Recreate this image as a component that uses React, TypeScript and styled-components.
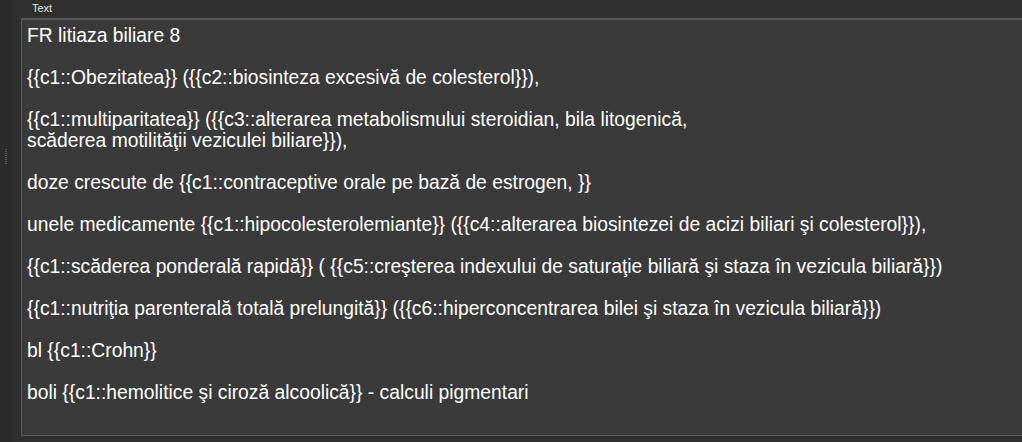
import styled, { createGlobalStyle } from "styled-components";

const paragraphs: string[][] = [
    ["FR litiaza biliare 8"],
    ["{{c1::Obezitatea}} ({{c2::biosinteza excesivă de colesterol}}),"],
    [
        "{{c1::multiparitatea}} ({{c3::alterarea metabolismului steroidian, bila litogenică,",
        "scăderea motilităţii veziculei biliare}}),",
    ],
    ["doze crescute de {{c1::contraceptive orale pe bază de estrogen, }}"],
    ["unele medicamente {{c1::hipocolesterolemiante}} ({{c4::alterarea biosintezei de acizi biliari şi colesterol}}),"],
    ["{{c1::scăderea ponderală rapidă}} ( {{c5::creşterea indexului de saturaţie biliară şi staza în vezicula biliară}})"],
    ["{{c1::nutriţia parenterală totală prelungită}} ({{c6::hiperconcentrarea bilei şi staza în vezicula biliară}})"],
    ["bl {{c1::Crohn}}"],
    ["boli {{c1::hemolitice şi ciroză alcoolică}} - calculi pigmentari"],
];

export default function App() {
    return (
        <>
            <GlobalStyle />
            <Page>
                <Splitter>
                    <Grip>
                        {Array.from({ length: 8 }).map((_, i) => (
                            <GripDot key={i} />
                        ))}
                    </Grip>
                </Splitter>
                <Field>
                    <FieldLabel>Text</FieldLabel>
                    <Editor>
                        {paragraphs.map((lines, i) => (
                            <Paragraph key={i}>
                                {lines.map((line, j) => (
                                    <Line key={j}>{line}</Line>
                                ))}
                            </Paragraph>
                        ))}
                    </Editor>
                </Field>
            </Page>
        </>
    );
}

const GlobalStyle = createGlobalStyle`
    html, body {
        margin: 0;
        padding: 0;
        background: #2f2f30;
        overflow: hidden;
    }
`;

const Page = styled.div`
    display: flex;
    width: 1022px;
    height: 442px;
    background: #2f2f30;
`;

const Splitter = styled.div`
    width: 11px;
    flex-shrink: 0;
    background: #2b2b2b;
    display: flex;
    justify-content: center;
    padding-top: 149px;
    box-sizing: border-box;
`;

const Grip = styled.div`
    display: flex;
    flex-direction: column;
    gap: 1px;
    height: fit-content;
`;

const GripDot = styled.div`
    width: 2px;
    height: 1px;
    background: #5a5a5a;
`;

const Field = styled.div`
    flex: 1;
    display: flex;
    flex-direction: column;
    padding-left: 10px;
    min-width: 0;
`;

const FieldLabel = styled.div`
    height: 18px;
    padding-left: 11px;
    box-sizing: border-box;
    font-family: "Liberation Sans", Arial, sans-serif;
    font-size: 11px;
    line-height: 16px;
    color: #e6e6e6;
`;

const Editor = styled.div`
    height: 418px;
    box-sizing: border-box;
    background: #3a3a3a;
    border: 1px solid #5c5c5c;
    border-top: 2px solid #5a5a5a;
    border-right: none;
    padding: 5px 0 0 5px;
    font-family: "Liberation Sans", Arial, sans-serif;
    font-size: 19.3px;
    line-height: 21px;
    color: #ffffff;
    overflow: hidden;
`;

const Paragraph = styled.div`
    margin-bottom: 21px;
`;

const Line = styled.div`
    white-space: nowrap;
`;
